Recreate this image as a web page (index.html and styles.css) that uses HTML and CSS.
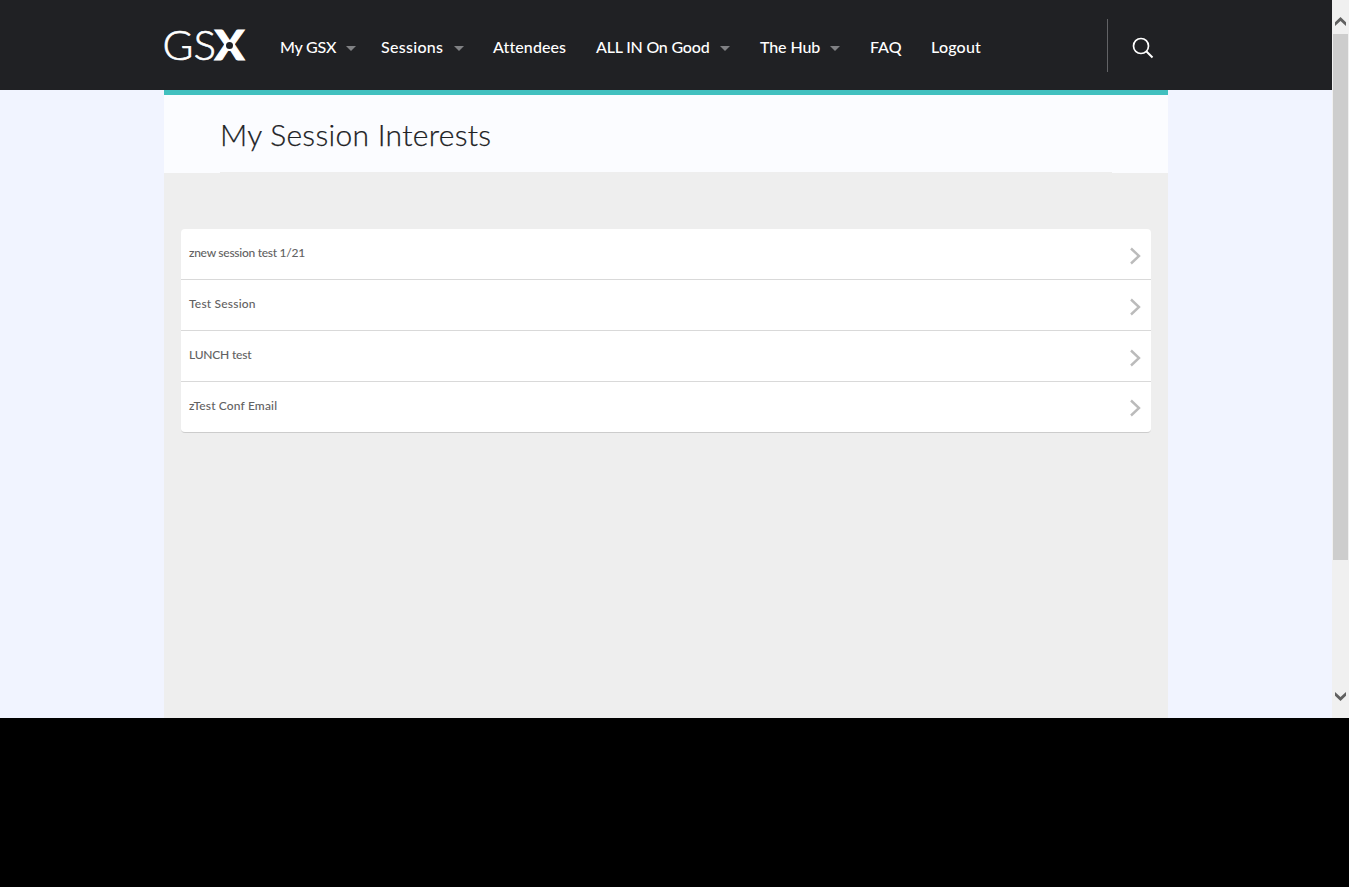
FILE: index.html
```html
<!DOCTYPE html>
<html lang="en">
<head>
<meta charset="utf-8">
<title>My Session Interests</title>
<link rel="stylesheet" href="styles.css">
</head>
<body>
<div class="window">
  <div class="page">
    <header class="topbar">
      <div class="topbar-inner">
        <svg class="logo" width="88" height="60" viewBox="-4 -12 88 60" role="img" aria-label="GSX">
          <text class="logo-thin" x="-1.5" y="32.3" textLength="53.5" lengthAdjust="spacingAndGlyphs">GS</text>
          <text class="logo-bold" x="50.5" y="32.3" textLength="30" lengthAdjust="spacingAndGlyphs">X</text>
          <circle cx="65.5" cy="17.5" r="5.6" fill="#fff"/>
          <circle cx="65.5" cy="17.5" r="3.5" fill="#202124"/>
        </svg>
        <nav class="menu">
          <a class="item my"><span>My GSX</span><i class="caret"></i></a>
          <a class="item sessions"><span>Sessions</span><i class="caret"></i></a>
          <a class="item attendees"><span>Attendees</span></a>
          <a class="item good"><span>ALL IN On Good</span><i class="caret"></i></a>
          <a class="item hub"><span>The Hub</span><i class="caret"></i></a>
          <a class="item faq"><span>FAQ</span></a>
          <a class="item logout"><span>Logout</span></a>
        </nav>
        <div class="search">
          <svg width="24" height="24" viewBox="0 0 24 24" fill="none" stroke="#fff"><circle cx="9" cy="10" r="7.5" stroke-width="1.7"/><path d="M14.5 15.5L20.5 21.5" stroke-width="2"/></svg>
        </div>
      </div>
    </header>
    <main class="content">
      <div class="heading"><h1>My Session Interests</h1></div>
      <ul class="list">
        <li><span class="r1">znew session test 1/21</span><svg class="chev" width="12" height="18" viewBox="0 0 12 18"><path d="M2 1.5L10 9L2 16.5"/></svg></li>
        <li><span class="r2">Test Session</span><svg class="chev" width="12" height="18" viewBox="0 0 12 18"><path d="M2 1.5L10 9L2 16.5"/></svg></li>
        <li><span class="r3">LUNCH test</span><svg class="chev" width="12" height="18" viewBox="0 0 12 18"><path d="M2 1.5L10 9L2 16.5"/></svg></li>
        <li><span class="r4">zTest Conf Email</span><svg class="chev" width="12" height="18" viewBox="0 0 12 18"><path d="M2 1.5L10 9L2 16.5"/></svg></li>
      </ul>
    </main>
  </div>
  <div class="scrollbar">
    <svg width="17" height="34" viewBox="0 0 17 34"><path d="M3 22.2L8.5 17L14 22.2V26L8.5 21L3 26Z" fill="#606060"/></svg>
    <div class="thumb"></div>
    <svg width="17" height="34" viewBox="0 0 17 34"><path d="M3 8L8.5 13L14 8V11.8L8.5 17L3 11.8Z" fill="#606060"/></svg>
  </div>
</div>
</body>
</html>
```
FILE: styles.css
```css
* { box-sizing: border-box; }
html, body { margin: 0; height: 887px; overflow: hidden; background: #000; }
body { font-family: Lato, "Open Sans", sans-serif; }
.window { display: flex; height: 718px; }
.page { width: 1332px; background: #f1f4ff; }
.topbar { height: 90px; background: #202124; }
.topbar-inner { display: flex; width: 1004px; height: 90px; margin-left: 164px; align-items: center; }
.logo { flex: none; margin: 2px 0 0 -4px; }
.logo text { fill: #fff; font-family: Lato, sans-serif; }
.logo-thin { font-size: 41px; font-weight: 300; stroke: #fff; stroke-width: 0.6px; }
.logo-bold { font-size: 41px; font-weight: 900; stroke: #fff; stroke-width: 1px; }
.menu { display: flex; flex: none; width: 827px; margin-left: 32px; padding-top: 4px; }
.item { display: flex; flex: none; align-items: center; color: #fff; font: 500 16px/24px Lato, sans-serif; white-space: nowrap; }
.my { width: 101px; }
.my span { width: 66px; letter-spacing: -0.2px; }
.sessions { width: 112px; }
.sessions span { width: 73px; letter-spacing: 0.3px; }
.attendees { width: 103px; letter-spacing: 0.1px; }
.good { width: 164px; }
.good span { width: 124px; letter-spacing: -0.2px; }
.hub { width: 110px; }
.hub span { width: 70px; letter-spacing: -0.1px; }
.faq { width: 61px; }
.logout { width: 60px; letter-spacing: 0.2px; }
.caret { margin-top: 2px; border: 5px solid transparent; border-top-color: #808184; border-bottom: 0; }
.search { flex: none; width: 61px; height: 53px; border-left: 1px solid #626366; padding: 17px 0 0 24px; }
.search svg { display: block; }
.content { width: 1004px; height: 628px; margin-left: 164px; background: #eee; }
.heading { height: 83px; border-top: 5px solid #41c0bf; background: #fbfcff; padding: 0 56px; }
.heading h1 { height: 78px; margin: 0; border-bottom: 1px solid #eee; color: #202124; font: 300 30px/79px Lato, sans-serif; letter-spacing: 0.3px; -webkit-text-stroke: 0.25px #202124; white-space: nowrap; }
.list { width: 970px; margin: 56px 0 0 17px; padding: 0; list-style: none; background: #fff; border-radius: 4px; border-bottom: 1px solid #ccc; }
.list li { display: flex; justify-content: space-between; height: 51px; padding: 15px 10px 0 8px; border-bottom: 1px solid #d9d9d9; color: #626262; font: 500 12px/18px Lato, sans-serif; }
.list li:last-child { height: 50px; border-bottom: 0; }
.r1 { letter-spacing: -0.27px; }
.r2 { letter-spacing: 0.2px; }
.r3 { letter-spacing: -0.2px; }
.r4 { letter-spacing: 0.15px; }
.chev { margin-top: 3px; fill: none; stroke: #bbb; stroke-width: 2.4; }
.list li:last-child .chev { margin-top: 2px; }
.scrollbar { display: flex; flex-direction: column; width: 17px; background: #f0f0f0; }
.scrollbar svg { display: block; flex: none; }
.thumb { width: 15px; height: 526px; margin: 0 1px 124px; background: #cdcdcd; }
```
